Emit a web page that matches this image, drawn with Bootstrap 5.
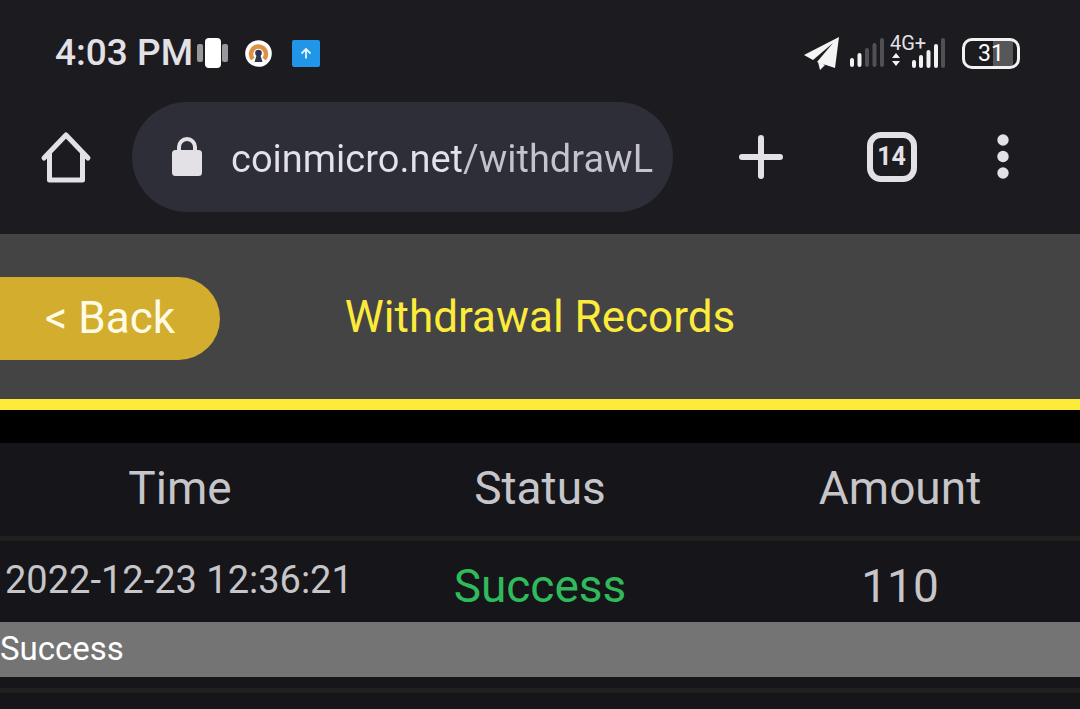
<!DOCTYPE html>
<html lang="en">
<head>
<meta charset="utf-8">
<meta name="viewport" content="width=device-width, initial-scale=1">
<title>Withdrawal Records</title>
<link href="https://cdn.jsdelivr.net/npm/bootstrap@5.3.0/dist/css/bootstrap.min.css" rel="stylesheet">
<style>
  body { background: #161519; color: #c6c5c9; font-family: Roboto, "Liberation Sans", sans-serif; }
  svg { display: block; flex: none; }
  .chrome-top { background: #1c1b1f; padding-bottom: 22px; color: #e3e1e6; }
  .status-bar { height: 102px; padding: 4px 60px 0 55px; }
  .clock { font-size: 37px; font-weight: 500; line-height: 44px; }
  .notices { gap: 20px; margin-left: 16px; }
  .net-type { font-size: 20px; line-height: 20px; }
  .data-type { width: 56px; height: 36px; margin-left: 6px; }
  .data-label { top: 0; left: 0; margin-top: -2px; }
  .data-bars { bottom: 0; left: 0; }
  .battery { width: 58px; height: 31px; border: 3px solid #f2f2f2; border-radius: 10px; font-size: 23px; line-height: 26px; background: linear-gradient(90deg, transparent 54%, #57565a 54%, #57565a 92%, transparent 92%); color: #fff; }
  .tool-bar { height: 110px; padding: 0 71px 0 40px; }
  .icon-btn { background: none; border: 0; padding: 0; color: #e3e1e6; }
  .address { background: #2e2e38; border-radius: 55px; margin-left: 40px; padding: 0 16px 0 39px; height: 110px; min-width: 0; }
  .address-input {
    border: 0; padding: 4px 0 0; outline: 0; min-width: 0; margin-left: 28px; font-size: 38px; line-height: 48px; color: #e3e1ec;
    background: linear-gradient(90deg, #e3e1ec 232px, #c4c2cd 232px); -webkit-background-clip: text; background-clip: text;
    -webkit-text-fill-color: transparent;
  }
  .tool-actions { width: 273px; margin-left: 63px; }
  .tab-count { width: 50px; height: 50px; border: 6px solid #e3e1e6; border-radius: 14px; font-size: 25px; font-weight: 700; line-height: 38px; }
  .page-head { background: #444; border-bottom: 11px solid #fdeb3c; height: 176px; }
  .side-col { width: 220px; }
  .back-btn { background: #d3ae2e; color: #fffbe6; border: 0; border-radius: 0 42px 42px 0; font-size: 44px; line-height: 50px; padding: 16px 45px 17px; margin-top: 4px; }
  .page-title { color: #fdeb3c; font-size: 44px; font-weight: 400; line-height: 52px; }
  .head-gap { height: 33px; background: #000; }
  .records { table-layout: fixed; border-collapse: separate; border-spacing: 0; }
  .records th, .records td { width: 33.33%; padding: 0; text-align: center; white-space: nowrap; font-weight: 400; font-size: 46px; line-height: 54px; }
  .records thead th { height: 98px; padding-bottom: 4px; border-bottom: 5px solid #20201f; }
  .records .entry td { height: 81px; padding-top: 8px; }
  .records .entry .stamp { font-size: 38px; padding: 0 0 4px 5px; text-align: left; }
  .records .entry .state { color: #2fba5b; }
  .records .remark td { background: #747474; color: #fff; text-align: left; font-size: 33px; height: 55px; padding-bottom: 2px; line-height: 53px; }
  .records .row-end td { height: 16px; line-height: 11px; border-bottom: 5px solid #20201f; }
</style>
</head>
<body>
<div class="chrome-top">
  <div class="status-bar d-flex align-items-center justify-content-between">
    <div class="d-flex align-items-center">
      <span class="clock">4:03 PM</span>
      <svg class="ms-1" width="32" height="32" viewBox="0 0 32 32"><rect x="0" y="7" width="6" height="18" rx="2" fill="#98979a"/><rect x="25" y="7" width="6" height="18" rx="2" fill="#98979a"/><rect x="8" y="1" width="16" height="30" rx="4" fill="#fff"/></svg>
      <div class="notices d-flex align-items-center">
        <svg width="27" height="27" viewBox="0 0 27 27"><circle cx="13.500" cy="13.500" r="13.300" fill="#fff"/><path d="M8 19A7.500 7.500 0 1 1 19 19" fill="none" stroke="#dc9145" stroke-width="4.500"/><circle cx="13.500" cy="13" r="3.300" fill="#2c3550"/><path d="M12 14h3l2.500 8h-8z" fill="#2c3550"/></svg>
        <svg width="28" height="27" viewBox="0 0 28 27"><rect width="28" height="27" rx="2" fill="#2196e8"/><path d="M14 18.500V9M9.500 13.500 14 9 18.500 13.500" fill="none" stroke="#e8f5ff" stroke-width="1.800"/></svg>
      </div>
    </div>
    <div class="d-flex align-items-center">
      <svg width="36" height="33" viewBox="0 0 36 33"><path d="M35 0 0 18l9 5L29 6 13 25l18 6zM14 25l2 8 5-5z" fill="#f4f4f5"/></svg>
      <svg class="ms-2" width="36" height="32" viewBox="0 0 36 32"><g stroke-width="4" stroke-linecap="round"><path d="M4 23v5M11.500 18v10" stroke="#f2f2f2"/><path d="M19 13v15M26.500 8v20M34 3v25" stroke="#515055"/></g></svg>
      <div class="data-type position-relative">
        <svg class="data-bars position-absolute" width="56" height="36" viewBox="0 0 56 36"><path d="M6 18l4 5H2zM6 31l4-5H2z" fill="#f2f2f2"/><g stroke-width="4" stroke-linecap="round"><path d="M24 27v4M31 22v9M38.500 17v14M46 11v20" stroke="#f2f2f2"/><path d="M53 5v26" stroke="#515055"/></g></svg>
        <span class="net-type data-label position-absolute">4G+</span>
      </div>
      <div class="battery text-center ms-3">31</div>
    </div>
  </div>
  <div class="tool-bar d-flex align-items-center">
    <button class="icon-btn" type="button" aria-label="Home">
      <svg width="52" height="52" viewBox="0 0 52 52" fill="none" stroke="currentColor" stroke-width="5" stroke-linecap="round" stroke-linejoin="round"><path d="M4 27 26 4l22 23M9.500 23v26h33V23"/></svg>
    </button>
    <div class="address d-flex align-items-center flex-grow-1">
      <svg width="32" height="42" viewBox="0 0 32 42"><path d="M8 16v-5a8 8 0 0 1 16 0v5" fill="none" stroke="#e3e1e6" stroke-width="4"/><rect x="1" y="14" width="30" height="26" rx="3.500" fill="#e3e1e6"/></svg>
      <input class="address-input flex-fill" type="text" aria-label="Address" value="coinmicro.net/withdrawL">
    </div>
    <div class="tool-actions flex-shrink-0 d-flex align-items-center justify-content-between">
      <button class="icon-btn" type="button" aria-label="New tab">
        <svg width="50" height="46" viewBox="-3 0 50 46" stroke="currentColor" stroke-width="6" stroke-linecap="round"><path d="M22 4v38M3 23h38"/></svg>
      </button>
      <button class="icon-btn tab-count text-center" type="button" aria-label="14 open tabs">14</button>
      <button class="icon-btn" type="button" aria-label="Menu">
        <svg width="12" height="46" viewBox="0 0 12 46" fill="currentColor"><circle cx="6" cy="6" r="5.700"/><circle cx="6" cy="22.500" r="5.700"/><circle cx="6" cy="39" r="5.700"/></svg>
      </button>
    </div>
  </div>
</div>

<header class="page-head d-flex align-items-center">
  <div class="side-col"><button class="back-btn w-100 text-nowrap text-start" type="button">&lt; Back</button></div>
  <h1 class="page-title flex-grow-1 text-center mb-0">Withdrawal Records</h1>
  <div class="side-col"></div>
</header>
<div class="head-gap"></div>

<table class="records w-100">
  <thead>
    <tr><th scope="col">Time</th><th scope="col">Status</th><th scope="col">Amount</th></tr>
  </thead>
  <tbody>
    <tr class="entry"><td class="stamp">2022-12-23 12:36:21</td><td class="state">Success</td><td>110</td></tr>
    <tr class="remark"><td colspan="3">Success</td></tr>
    <tr class="row-end"><td colspan="3"></td></tr>
  </tbody>
</table>
<script src="https://cdn.jsdelivr.net/npm/bootstrap@5.3.0/dist/js/bootstrap.bundle.min.js"></script>
</body>
</html>
